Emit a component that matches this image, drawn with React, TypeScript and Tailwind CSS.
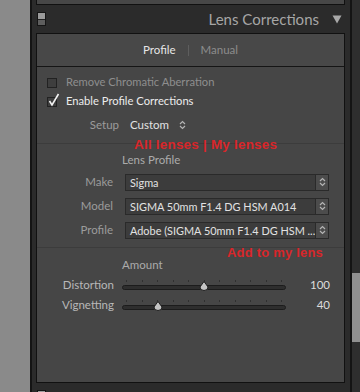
import React from "react"

const ui = "font-['Lato','Open_Sans',sans-serif]"
const red = "font-['Liberation_Sans',sans-serif] font-bold text-[#d8262a]"

function Stepper() {
  return (
    <svg width="7" height="10" viewBox="0 0 7 10" fill="none" stroke="#b4b4b4" strokeWidth="1.2">
      <path d="M1 4 L3.5 1.5 L6 4" />
      <path d="M1 6 L3.5 8.5 L6 6" />
    </svg>
  )
}

function Toggle() {
  return (
    <div className="flex h-[14px] w-[9px] flex-col border border-[#151515]">
      <div className="h-[6px] bg-[#9a9a9a]" />
      <div className="h-[1px] bg-[#222]" />
      <div className="flex-1 bg-[#5e5e5e]" />
    </div>
  )
}

function Checkbox({ checked }: { checked?: boolean }) {
  return (
    <div className="relative h-[10px] w-[10px] border border-[#222] bg-[#3e3e3e]">
      {checked && (
        <svg className="absolute -top-[5px] left-[0px]" width="12" height="14" viewBox="0 0 12 14" fill="none" stroke="#f2f2f2" strokeWidth="1.6">
          <path d="M1.5 8 L4 12 L10.5 1" />
        </svg>
      )}
    </div>
  )
}

function SelectRow({ label, value }: { label: string; value: string }) {
  return (
    <div className="flex h-[24px] items-center">
      <span className="w-[76px] text-right text-[11.5px] text-[#9c9c9c]">{label}</span>
      <div className="ml-[12px] flex h-[17px] w-[204px] border border-[#2a2a2a] bg-[#3c3c3c]">
        <span className="flex-1 overflow-hidden whitespace-nowrap pl-[4px] text-[10.9px] leading-[15px] text-[#e2e2e2]">{value}</span>
        <span className="flex w-[13px] items-center justify-center border-l border-[#2a2a2a] bg-[#4c4c4c]">
          <Stepper />
        </span>
      </div>
    </div>
  )
}

function SliderRow({ label, value, pos }: { label: string; value: string; pos: number }) {
  return (
    <div className="flex h-[20px] items-center">
      <span className="w-[77px] text-right text-[11.5px] text-[#b8b8b8]">{label}</span>
      <div className="relative ml-[8px] h-[14px] w-[164px]">
        <div className="flex justify-between px-[4px] pt-[2px]">
          {Array.from({ length: 11 }).map((_, i) => (
            <div key={i} className="h-[2px] w-[1px] bg-[#303030]" />
          ))}
        </div>
        <div className="mt-[3px] h-[5px] rounded-full border border-[#1c1c1c] bg-[#2e2e2e]" />
        <svg className="absolute top-[3px]" style={{ left: pos - 5 }} width="10" height="10" viewBox="0 0 10 10">
          <path d="M5 0.5 L9 6 A4 3.5 0 0 1 1 6 Z" fill="#c4c4c4" stroke="#1e1e1e" strokeWidth="1" />
        </svg>
      </div>
      <span className="w-[44px] text-right text-[11.5px] text-[#dcdcdc]">{value}</span>
    </div>
  )
}

export default function App() {
  return (
    <div className={`flex h-[392px] w-[360px] overflow-hidden ${ui}`}>
      <div className="w-[30px] bg-[#8a8a8a]" />
      <div className="w-[2px] bg-[#141414]" />

      <div className="flex w-[318px] flex-col bg-[#2b2b2b] pl-[4px] pr-[5px]">
        <div className="h-[5px] border-x border-b border-[#111] bg-[#474747]" />

        <div className="flex h-[28px] items-center pl-[1px] pr-[3px]">
          <Toggle />
          <span className="ml-auto text-[15px] text-[#a6a6a6]">Lens Corrections</span>
          <svg className="ml-[13px]" width="10" height="9" viewBox="0 0 10 9">
            <path d="M0.5 0.5 L9.5 0.5 L5 8.5 Z" fill="#a8a8a8" />
          </svg>
        </div>

        <div className="flex h-[350px] flex-col border border-[#111] bg-[#464646]">
          <div className="flex h-[33px] items-center justify-center gap-[12px] border-b border-[#151515] bg-[#484848] text-[11.5px]">
            <span className="text-[#e6e6e6]">Profile</span>
            <span className="h-[11px] w-[1px] bg-[#5e5e5e]" />
            <span className="text-[#8c8c8c]">Manual</span>
          </div>

          <div className="pt-[6px] text-[11.2px]">
            <div className="flex h-[19px] items-center gap-[9px] pl-[10px]">
              <Checkbox />
              <span className="text-[#8e8e8e]">Remove Chromatic Aberration</span>
            </div>
            <div className="flex h-[19px] items-center gap-[9px] pl-[10px]">
              <Checkbox checked />
              <span className="text-[#ececec]">Enable Profile Corrections</span>
            </div>
            <div className="flex h-[28px] items-center text-[11.5px]">
              <span className="w-[82px] text-right text-[#9c9c9c]">Setup</span>
              <span className="ml-[11px] text-[#e2e2e2]">Custom</span>
              <span className="ml-[10px] flex">
                <Stepper />
              </span>
            </div>
          </div>

          <div className="relative mt-[4px] border-t border-[#3c3c3c] pb-[5px] pt-[6px]">
            <span className={`absolute -top-[9px] left-[97px] text-[13.5px] tracking-[0.2px] ${red}`}>All lenses | My lenses</span>
            <div className="flex h-[20px] items-center pl-[85px] text-[11.5px] text-[#ababab]">Lens Profile</div>
            <SelectRow label="Make" value="Sigma" />
            <SelectRow label="Model" value="SIGMA 50mm F1.4 DG HSM A014" />
            <SelectRow label="Profile" value="Adobe (SIGMA 50mm F1.4 DG HSM ..." />
          </div>

          <div className="relative flex-1 border-t border-[#3c3c3c] pt-[7px]">
            <span className={`absolute -top-[5px] left-[190px] text-[13px] tracking-[0.2px] ${red}`}>Add to my lens</span>
            <div className="flex h-[20px] items-center pl-[85px] text-[11.5px] text-[#ababab]">Amount</div>
            <SliderRow label="Distortion" value="100" pos={82} />
            <SliderRow label="Vignetting" value="40" pos={36} />
          </div>
        </div>

        <div className="h-[9px] pl-[1px] pt-[7px]">
          <Toggle />
        </div>
      </div>

      <div className="w-[2px] bg-[#141414]" />
      <div className="flex w-[8px] flex-col bg-[#2e2e2e] pt-[273px]">
        <div className="h-[69px] bg-[#909090]" />
      </div>
    </div>
  )
}
